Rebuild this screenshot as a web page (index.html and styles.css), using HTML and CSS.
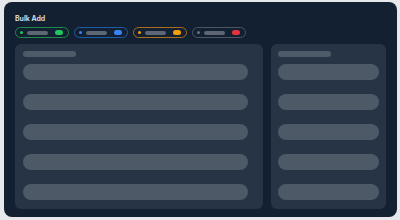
FILE: index.html
```html
<!DOCTYPE html>
<html lang="en">
<head>
    <meta charset="UTF-8">
    <meta name="viewport" content="width=device-width, initial-scale=1.0">
    <title>Bulk Add</title>
    <link rel="stylesheet" href="styles.css">
</head>
<body>
    <div class="card">
        <h1 class="title">Bulk Add</h1>
        <div class="chips">
            <div class="chip chip-green"><span class="dot"></span><span class="bar"></span><span class="pill"></span></div>
            <div class="chip chip-blue"><span class="dot"></span><span class="bar"></span><span class="pill"></span></div>
            <div class="chip chip-orange"><span class="dot"></span><span class="bar"></span><span class="pill"></span></div>
            <div class="chip chip-grey"><span class="dot"></span><span class="bar"></span><span class="pill"></span></div>
        </div>
        <div class="panels">
            <div class="panel panel-main">
                <div class="panel-head"></div>
                <div class="row"></div>
                <div class="row"></div>
                <div class="row"></div>
                <div class="row"></div>
                <div class="row"></div>
            </div>
            <div class="panel panel-side">
                <div class="panel-head"></div>
                <div class="row"></div>
                <div class="row"></div>
                <div class="row"></div>
                <div class="row"></div>
                <div class="row"></div>
            </div>
        </div>
    </div>
</body>
</html>
```

FILE: styles.css
```css
body {
    margin: 0;
    padding: 2px 3px 3px 4px;
    background-color: #e6e8ec;
    font-family: Inter, "Noto Sans", sans-serif;
}
.card {
    box-sizing: border-box;
    width: 393px;
    height: 215px;
    padding: 12px 11px 8px 11px;
    background-color: #132031;
    border-radius: 8px;
    display: flex;
    flex-direction: column;
}
.title {
    margin: 0;
    font-size: 7px;
    line-height: 10px;
    font-weight: 600;
    color: #e5e7eb;
}
.chips {
    display: flex;
    gap: 5px;
    margin-top: 3px;
}
.chip {
    box-sizing: border-box;
    width: 54px;
    height: 11px;
    border: 1px solid #4b5563;
    border-radius: 6px;
    display: flex;
    align-items: center;
    padding: 0 5px 0 4px;
}
.dot {
    width: 3px;
    height: 3px;
    border-radius: 50%;
    background-color: #6b7280;
}
.bar {
    width: 21px;
    height: 4px;
    margin-left: 4px;
    border-radius: 2px;
    background-color: #5c6674;
}
.pill {
    width: 8px;
    height: 5px;
    margin-left: auto;
    border-radius: 3px;
    background-color: #e5343f;
}
.chip-green { border-color: #1d8a4c; }
.chip-green .dot, .chip-green .pill { background-color: #22c55e; }
.chip-blue { border-color: #1f5aa6; }
.chip-blue .dot, .chip-blue .pill { background-color: #3b82f6; }
.chip-orange { border-color: #a86d1d; }
.chip-orange .dot, .chip-orange .pill { background-color: #f59e0b; }
.panels {
    display: grid;
    grid-template-columns: 248px 115px;
    gap: 8px;
    margin-top: 6px;
    flex: 1;
}
.panel {
    background-color: #263445;
    border-radius: 6px;
    padding: 7px 7px 0 7px;
    display: flex;
    flex-direction: column;
}
.panel-main {
    padding-left: 8px;
    padding-right: 15px;
}
.panel-head {
    width: 53px;
    height: 6px;
    border-radius: 3px;
    background-color: #4e5a67;
}
.row {
    height: 16px;
    margin-top: 14px;
    border-radius: 8px;
    background-color: #4d5966;
}
.panel-head + .row {
    margin-top: 7px;
}
```
